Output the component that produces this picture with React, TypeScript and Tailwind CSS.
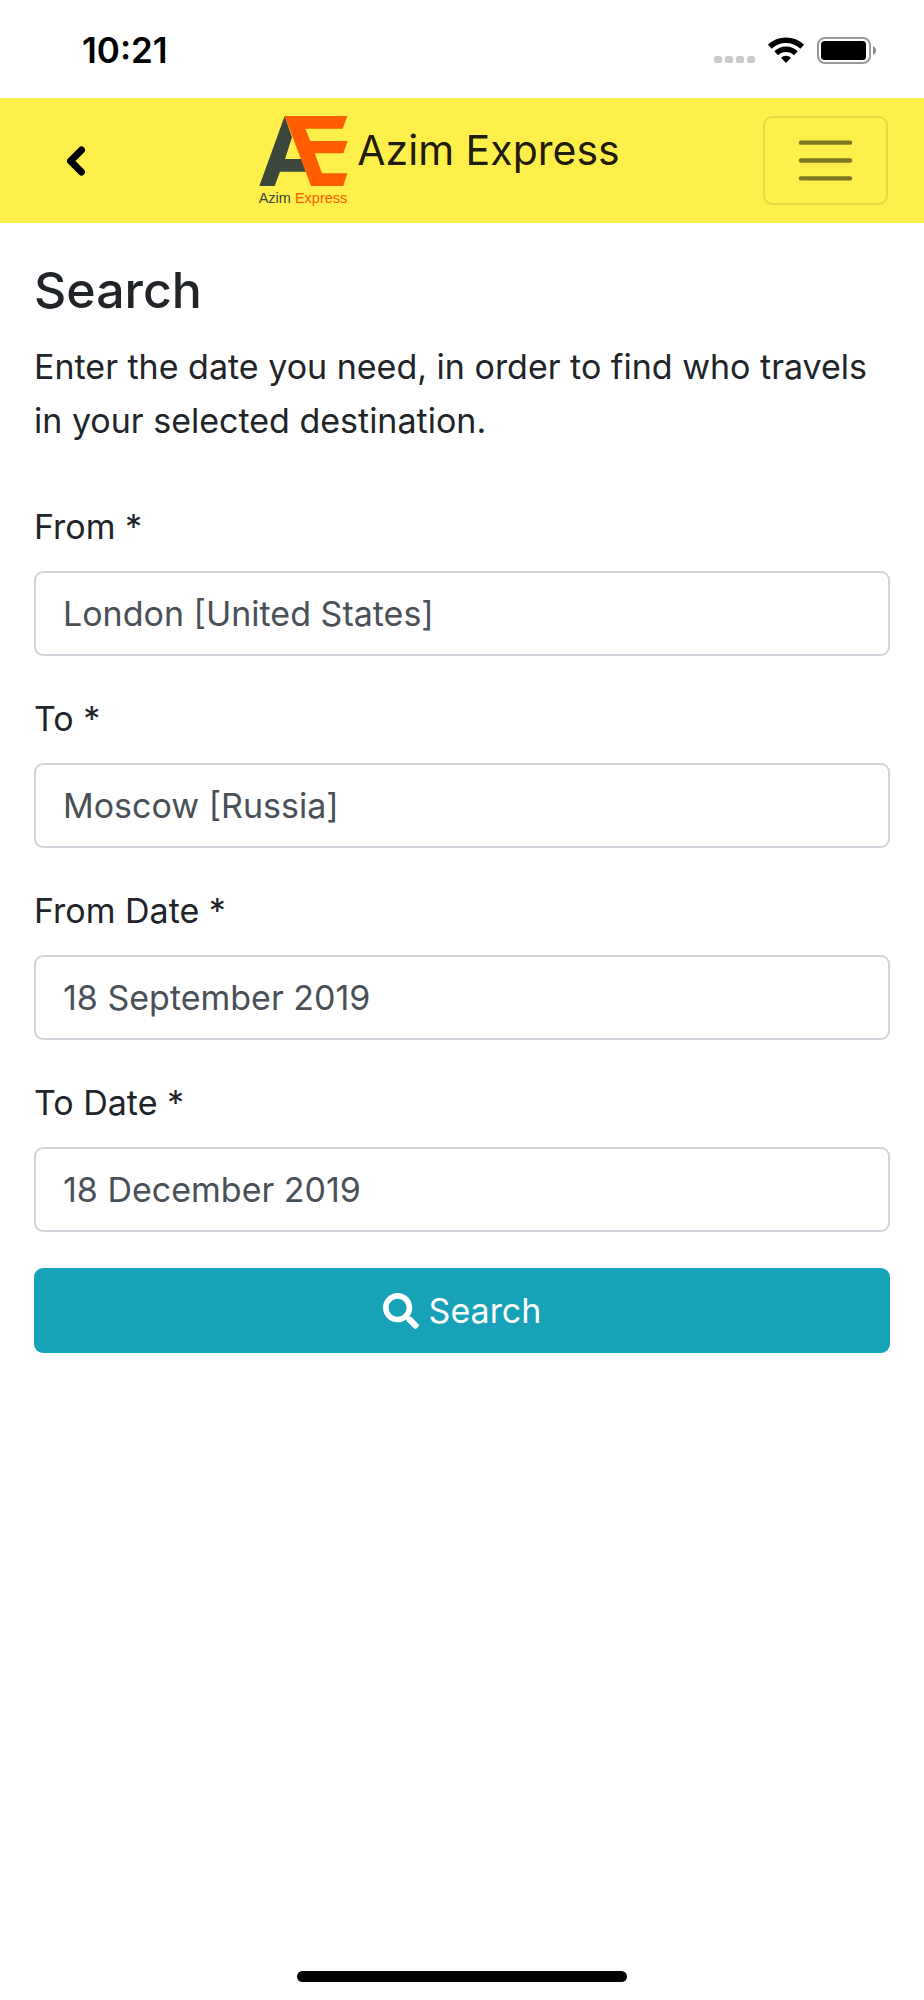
import { useState } from 'react';
import { FaSearch } from 'react-icons/fa';

const fields = [
  { id: 'from', label: 'From *', value: 'London [United States]' },
  { id: 'to', label: 'To *', value: 'Moscow [Russia]' },
  { id: 'fromDate', label: 'From Date *', value: '18 September 2019' },
  { id: 'toDate', label: 'To Date *', value: '18 December 2019' },
];

function StatusBar() {
  return (
    <div className="flex h-[98px] items-center justify-between pt-[2px] pr-12 pl-[82px]">
      <span className="text-[35px] leading-none font-semibold text-black">10:21</span>
      <svg className="h-7 w-[162px]" viewBox="714 36 162 28" aria-hidden="true">
        <g fill="#cbcbcb">
          <rect x="714" y="56" width="8" height="7" rx="2.5" />
          <rect x="725" y="56" width="8" height="7" rx="2.5" />
          <rect x="736" y="56" width="8" height="7" rx="2.5" />
          <rect x="747" y="56" width="8" height="7" rx="2.5" />
        </g>
        <g fill="none" stroke="#000" strokeWidth="5.4">
          <path d="M769.8 46.8A23.5 23.5 0 0 1 802.2 46.8" />
          <path d="M776.2 53.2A14.2 14.2 0 0 1 795.8 53.2" />
        </g>
        <path d="M786 63l-5-5.2a7.2 7.2 0 0 1 10 0z" />
        <rect x="818" y="38" width="52" height="25" rx="7" fill="none" stroke="#999" strokeWidth="2" />
        <rect x="821" y="41" width="45" height="19" rx="3.5" />
        <path d="M873 46c4 2 4 7 0 9z" fill="#888" />
      </svg>
    </div>
  );
}

function Logo() {
  return (
    <svg className="size-[89px] shrink-0 overflow-visible" viewBox="18 18 267 267" aria-hidden="true">
      <path fill="#3c463c" d="M95 18L19 228H65L81 185H165L145 147H96L117 82z" />
      <path
        fill="#ff5d00"
        d="M95 18H283L269 56H157L172 93H284L271 130H185L207 190H283L271 228H174z"
      />
      <text x="17" y="278" fontSize="43.5" fontFamily="Liberation Sans, Arial, sans-serif" fill="#3c463c">
        Azim <tspan fill="#ff5d00">Express</tspan>
      </text>
    </svg>
  );
}

function Navbar() {
  return (
    <header className="flex items-center justify-between bg-[#ffef4a] px-9 py-[18px]">
      <button type="button" aria-label="Back" className="flex h-[89px] w-20 items-center justify-center">
        <svg className="h-8 w-5" viewBox="0 0 20 32" fill="none" stroke="#000" strokeWidth="7" strokeLinecap="round" strokeLinejoin="round">
          <path d="M15.5 5L4.5 16l11 11" />
        </svg>
      </button>

      <a href="#" className="flex items-start gap-[9px]">
        <Logo />
        <span className="text-[41px] leading-[68px] text-black/90">Azim Express</span>
      </a>

      <button
        type="button"
        aria-label="Toggle navigation"
        className="rounded-[9px] border-2 border-black/10 px-[27px] py-[9px]"
      >
        <svg className="size-[67px]" viewBox="0 0 30 30" fill="none" stroke="rgba(0,0,0,0.5)" strokeWidth="2" strokeLinecap="round">
          <path d="M4 7h22M4 15h22M4 23h22" />
        </svg>
      </button>
    </header>
  );
}

function SearchForm() {
  const [values, setValues] = useState<Record<string, string>>(
    Object.fromEntries(fields.map((f) => [f.id, f.value]))
  );

  return (
    <form className="flex flex-col gap-9" onSubmit={(e) => e.preventDefault()}>
      {fields.map((field) => (
        <div key={field.id} className="flex flex-col gap-[17px]">
          <label htmlFor={field.id} className="text-[34px] leading-[54px]">
            {field.label}
          </label>
          <input
            id={field.id}
            type="text"
            value={values[field.id]}
            onChange={(e) => setValues({ ...values, [field.id]: e.target.value })}
            className="h-[85px] w-full rounded-[9px] border-2 border-[#ced4da] bg-white px-[27px] text-[34px] text-[#495057]"
          />
        </div>
      ))}
      <button
        type="submit"
        className="flex h-[85px] w-full items-center justify-center gap-[10px] rounded-[9px] bg-[#17a2b8] text-[34px] text-white"
      >
        <FaSearch className="size-9" />
        Search
      </button>
    </form>
  );
}

export default function App() {
  return (
    <div className="flex min-h-screen flex-col bg-white font-['Inter',sans-serif] text-[#212529]">
      <StatusBar />
      <Navbar />
      <main className="flex-1 px-[34px] pt-9">
        <h1 className="mb-[18px] text-[50px] leading-[63px] font-medium">Search</h1>
        <p className="mb-[52px] text-[34px] leading-[54px]">
          Enter the date you need, in order to find who travels in your selected destination.
        </p>
        <SearchForm />
      </main>
      <div className="mx-auto mb-[18px] h-[11px] w-[330px] rounded-full bg-black" />
    </div>
  );
}
